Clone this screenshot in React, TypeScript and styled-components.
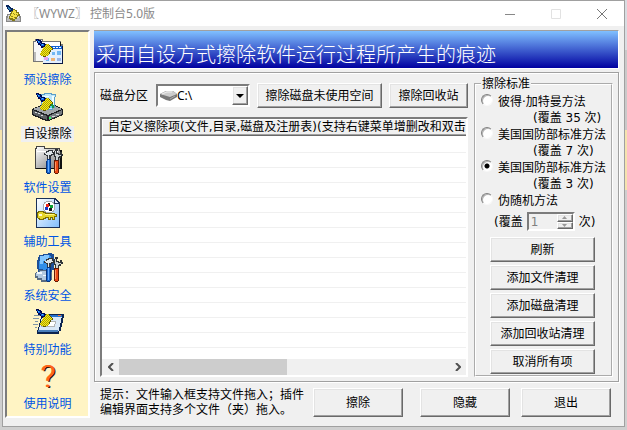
import React, { useState } from "react";
import styled, { createGlobalStyle, css } from "styled-components";

const FACE = "#f0f0f0";
const sans = '"DejaVu Sans", "Noto Sans CJK SC", sans-serif';
const narrowSans = '"Noto Sans", "Noto Sans CJK SC", sans-serif';

const GlobalStyle = createGlobalStyle`
  * { box-sizing: border-box; }
  body { margin: 0; background: #cfcfcf; color: #000; font: 12px/16px ${sans}; }
  button, input, select { font: inherit; color: inherit; margin: 0; padding: 0; border-radius: 0; }
  svg { display: block; flex: none; }
`;

const raised = css`
  border: 1px solid;
  border-color: #fff #696969 #696969 #fff;
  box-shadow: inset -1px -1px #a0a0a0, inset 1px 1px #e3e3e3;
`;
const sunken = css`
  border: 2px solid;
  border-color: #7c7c7c #fff #fff #7c7c7c;
`;
const etched = css`
  border: 1px solid #a0a0a0;
  box-shadow: inset 1px 1px #fff, 1px 1px #fff;
`;

const Desktop = styled.div`
  padding: 0 2px 2px;
  background: linear-gradient(#d9dde2 0 50px, #c9c9c9 50px 130px, #f5e3ae 130px 190px, #cfcfcf 190px);
`;
const Window = styled.main`
  border: 1px solid #a0a0a0;
  background: ${FACE};
`;
const TitleBar = styled.header`
  display: flex;
  align-items: center;
  height: 25px;
  padding: 0 10px 0 2px;
  background: #fff;
  color: #8a8a8a;
  font-family: ${narrowSans};
`;
const Title = styled.h1`
  flex: 1;
  margin: 0 0 0 4px;
  font-size: 12px;
  font-weight: 400;
`;
const CaptionButtons = styled.div`
  display: flex;
  gap: 22px;
`;
const CaptionButton = styled.button`
  display: grid;
  place-items: center;
  width: 24px;
  height: 24px;
  border: 0;
  background: none;
`;
const Body = styled.div`
  display: flex;
  gap: 4px;
  padding: 4px 5px 8px 2px;
`;
const Sidebar = styled.nav`
  ${sunken}
  flex: none;
  width: 85px;
  padding: 4px 0 2px;
  background: #fff4c4;
  font-family: ${narrowSans};
`;
const NavItem = styled.a`
  display: flex;
  flex-direction: column;
  align-items: center;
  gap: 4px;
  height: 54px;
  color: #0055e5;
  text-decoration: none;
`;
const NavLabel = styled.span<{ $active: boolean }>`
  padding: 0 2px;
  ${(p) => p.$active && css`background: ${FACE}; color: #000;`}
`;
const HelpMark = styled.span`
  height: 32px;
  font: 300 32px/32px Roboto, sans-serif;
  color: #ff6418;
  text-shadow: 1px 0 #ff6418, 2px 1px #301000;
`;
const Content = styled.div`
  display: flex;
  flex: 1;
  flex-direction: column;
  min-width: 0;
`;
const Banner = styled.h2`
  height: 39px;
  margin: 0 0 3px;
  padding: 6px 2px 0;
  overflow: hidden;
  border: solid;
  border-width: 1px 1px 1px 0;
  border-color: #a0a0a0 #fff #fff;
  background: linear-gradient(#80c0ff, #0000a0);
  color: #fff;
  font: 300 20px/34px "Noto Sans CJK SC", sans-serif;
  white-space: nowrap;
`;
const Panel = styled.section`
  ${etched}
  display: flex;
  gap: 6px;
  padding: 4px 5px 4px;
`;
const Workspace = styled.div`
  display: flex;
  flex: 1;
  flex-direction: column;
  gap: 9px;
  min-width: 0;
  padding-top: 6px;
`;
const Toolbar = styled.div`
  display: flex;
  align-items: center;
  gap: 7px;
  white-space: nowrap;
`;
const ToolbarLabel = styled.label`
  flex: none;
  width: 49px;
`;
const DrivePicker = styled.div`
  ${sunken}
  display: flex;
  flex: 1;
  align-items: center;
  height: 23px;
  padding-left: 2px;
  background: #fff;
`;
const DriveSelect = styled.select`
  flex: 1;
  min-width: 0;
  height: 19px;
  appearance: none;
  border: 0;
  outline: 0;
  background: transparent;
  font-family: ${narrowSans};
`;
const DropArrow = styled.span`
  ${raised}
  display: grid;
  place-items: center;
  width: 16px;
  height: 19px;
  background: ${FACE};
  pointer-events: none;
`;
const PushButton = styled.button<{ $width?: number; $tall?: boolean }>`
  ${raised}
  flex: none;
  width: ${(p) => (p.$width ? p.$width + "px" : "auto")};
  height: ${(p) => (p.$tall ? 29 : 25)}px;
  background: ${FACE};
  line-height: 16px;
  white-space: nowrap;
`;
const ListView = styled.div`
  ${sunken}
  display: flex;
  flex: 1;
  flex-direction: column;
  background: #fff;
`;
const Table = styled.table`
  width: 100%;
  flex: none;
  table-layout: fixed;
  border-spacing: 0;
`;
const HeadCell = styled.th`
  height: 17px;
  padding: 0 0 0 5px;
  overflow: hidden;
  border: solid;
  border-width: 1px 0 1px 1px;
  border-color: #fff #fff #696969;
  box-shadow: inset 0 -1px #a0a0a0;
  background: ${FACE};
  font-weight: 400;
  line-height: 15px;
  text-align: left;
  white-space: nowrap;
`;
const EmptyCell = styled.td<{ $first: boolean }>`
  height: ${(p) => (p.$first ? 17 : 15)}px;
  padding: 0;
  border-bottom: 1px solid ${FACE};
`;
const ScrollBar = styled.div`
  display: grid;
  grid-template-columns: 17px 1fr 17px;
  height: 16px;
  margin-top: auto;
  background: ${FACE};
`;
const ScrollButton = styled.button`
  display: grid;
  place-items: center;
  border: 0;
  background: none;
`;
const ScrollThumb = styled.div`
  width: 51%;
  background: #cdcdcd;
`;
const Standards = styled.fieldset`
  flex: none;
  width: 139px;
  min-width: 0;
  margin: 0;
  padding: 3px 0 1px 5px;
  border: 2px groove #fff;
`;
const Legend = styled.legend`
  padding: 0 1px;
  line-height: 14px;
`;
const Options = styled.div`
  display: grid;
  gap: 1px;
`;
const Option = styled.label`
  display: flex;
  gap: 5px;
  white-space: nowrap;
`;
const OptionText = styled.span`
  display: grid;
`;
const Passes = styled.span`
  padding-left: 35px;
`;
const Radio = styled.input`
  flex: none;
  width: 12px;
  height: 12px;
  appearance: none;
  border: 1px solid;
  border-color: #808080 #f8f8f8 #f8f8f8 #808080;
  border-radius: 50%;
  background: #fff;
  box-shadow: inset 1px 1px #b4b4b4;
  &:checked { background: radial-gradient(circle, #000 0 2px, #fff 3px); }
`;
const PassRow = styled.div`
  display: flex;
  align-items: center;
  gap: 4px;
  margin: 3px 0 6px 13px;
  white-space: nowrap;
`;
const Spinner = styled.span`
  ${sunken}
  display: flex;
  width: 48px;
  height: 19px;
`;
const PassInput = styled.input`
  flex: 1;
  min-width: 0;
  padding-left: 2px;
  border: 0;
  background: ${FACE};
  color: #808080;
`;
const SpinButtons = styled.span`
  display: grid;
  width: 16px;
`;
const SpinButton = styled.button`
  ${raised}
  display: grid;
  place-items: center;
  min-height: 0;
  background: ${FACE};
`;
const Actions = styled.div`
  display: grid;
  gap: 3px;
  margin: 0 16px 0 9px;
`;
const Footer = styled.footer`
  display: flex;
  gap: 8px;
  padding: 6px 8px 0 6px;
`;
const Hint = styled.p`
  flex: 1;
  margin: 0;
  line-height: 15px;
  white-space: nowrap;
`;
const HintLine = styled.span`
  display: block;
`;
const FooterButtons = styled.div`
  display: flex;
  gap: 17px;
`;
const FooterPair = styled.div`
  display: flex;
  gap: 11px;
`;

const Drawing = styled.svg.attrs({ width: 32, height: 32, viewBox: "0 0 32 32", shapeRendering: "crispEdges" })``;

const Broom = ({ id }: { id: string }) => (
  <g>
    <defs>
      <pattern id={id} width="2" height="2" patternUnits="userSpaceOnUse">
        <path d="M0 0h2v2H0z" fill="#ffee10" />
        <path d="M0 0h1v1H0zM1 1h1v1H1z" fill="#a69e08" />
      </pattern>
    </defs>
    <path d="M4 3h3v1h2v1h1v2h3v1h1v3h-2v1H9v-2H8V9H6V7H5V5H4z" fill="#000a50" />
    <path d="M5 4h1v1H5zM6 5h2v2H6zM8 7h1v1H8zM9 8h3v2H9z" fill="#1560e8" />
    <path d="M6 5h1v1H6zM10 8h1v1h-1z" fill="#3fd2ff" />
    <path d="M14 8h3v1h1v1h1v1h1v1h1v2h-2v1h-1v2h-1v2h-1v1h-2v1h-3v-1H9v-1H8v-2h1v-2h1v-2h1v-2h2V9h1z" fill={`url(#${id})`} />
    <path d="M17 9h1v1h-1zM18 10h1v1h-1zM19 11h1v1h-1zM20 12h1v2h-1zM18 14h1v2h-1zM17 16h1v2h-1zM11 20h3v1h-3z" fill="#5d5800" />
  </g>
);

const Tools = () => (
  <g>
    <path d="M12 9h2V7h2V6h5v2h2v3h-3v1h-1v4h-4v-4h-1v-1h-2z" fill="#34383c" />
    <path d="M13 9h2V8h2V7h3v2h2v1h-3v1h-2v4h-1v-4h-2v-1h-1z" fill="#dfe5e8" />
    <path d="M22 7h1V5h3v2h-1v2h2v1h1V8h2v2h1v2h-2v2h-2v3h-4v-4h-1v-2h-1V9h-1z" fill="#303436" />
    <path d="M23 7h1v3h2v1h3v1h-2v1h-1v3h-2v-4h-1z" fill="#ccd2d4" />
    <path d="M15 15h4v14h-1v1h-3v-1h-1V17h1z" fill="#07337c" />
    <path d="M15 16h3v13h-3z" fill="#1766cd" />
    <path d="M16 16h1v12h-1z" fill="#65aaff" />
    <path d="M22 16h5v13h-1v1h-3v-1h-1z" fill="#651804" />
    <path d="M23 17h3v12h-3z" fill="#ed4b16" />
    <path d="M23 18h1v9h-1z" fill="#ff9865" />
  </g>
);

const PresetIcon = () => (
  <Drawing>
    <path d="M1 5h2V3h8v2h18v3h2v20H12v-2H1z" fill="#777" />
    <path d="M2 6h2V4h6v2h2v19H2z" fill="#f6f6f6" />
    <path d="M2 16h2v9H2z" fill="#bbb" />
    <path d="M12 6h16v4H12z" fill="#fff" />
    <path d="M28 6h1v4h-1z" fill="#111" />
    <path d="M11 10h19v17H11z" fill="#e2efff" />
    <path d="M11 10h19v3H11z" fill="#1262d5" />
    <path d="M21 11h2v1h-2zM24 11h2v1h-2zM27 11h2v1h-2z" fill="#fff" />
    <path d="M30 10h1v18H11v-1h19z" fill="#0a1844" />
    <path d="M20 16h3v3h-3zM25 15h4v4h-4zM14 22h3v3h-3z" fill="#71b7f3" />
    <path d="M19 22h4v3h-4z" fill="#edb476" />
    <path d="M25 22h4v3h-4z" fill="#9bb6e7" />
    <path d="M12 21h4v3h-4z" fill="#e3a5ee" />
    <Broom id="straw-preset" />
  </Drawing>
);
const CustomIcon = () => (
  <Drawing>
    <path d="M0 19L9 15H23L31 19V25L17 31H14L0 25Z" fill="#1c1f22" />
    <path d="M1 19L9 16H23L30 19L16 25Z" fill="#a2a7ab" />
    <path d="M1 20L15 26V30L1 24Z" fill="#5d6266" />
    <path d="M17 26L30 20V24L17 30Z" fill="#777c80" />
    <path d="M3 22h2v1H3zM6 23h2v1H6zM9 25h2v1H9zM20 26h3v1h-3zM24 24h3v1h-3z" fill="#d5d9dc" />
    <path d="M17 27h2v2h-2z" fill="#2dff68" />
    <path d="M8 4h4V3h8v1h4v3h-1v11h-2v2H11v-2H9z" fill="#5b9ec7" />
    <path d="M9 5h4V4h6v1h4v2h-1v10h-2v2h-8v-2h-2z" fill="#bfe7fa" />
    <path d="M20 6h2v9h-2zM12 6h5v1h-5z" fill="#f1ffff" />
    <path d="M15 14h4v-2h2v3h1v3h-5v-1h-2z" fill="#16964a" />
    <path d="M17 16h3v2h-3z" fill="#54d3ef" />
    <Broom id="straw-custom" />
  </Drawing>
);
const SettingsIcon = () => (
  <Drawing>
    <defs><linearGradient id="folder" x2="1" y2="1"><stop stopColor="#fff" /><stop offset="1" stopColor="#777" /></linearGradient></defs>
    <path d="M3 4h1V2h9v2h15v2h2v19H3z" fill="#444" />
    <path d="M4 5h1V3h7v2h15v2h1v17H4z" fill="url(#folder)" />
    <path d="M5 7h21v1H5z" fill="#fff" />
    <path d="M28 6h2v19H4v-1h24z" fill="#111" />
    <Tools />
  </Drawing>
);
const HelperIcon = () => (
  <Drawing>
    <defs><linearGradient id="sheet" x2="1" y2="1"><stop stopColor="#fff" /><stop offset="1" stopColor="#83bffc" /></linearGradient></defs>
    <path d="M4 0h20v1h1v1h1v1h1v1h1v26H4z" fill="#1b3158" />
    <path d="M5 1h17v5h5v23H5z" fill="url(#sheet)" />
    <path d="M23 2h1v1h1v1h1v1h-3z" fill="#dcecff" />
    <path d="M14 3h6v1h2v2h1v6h-1v2h-2v1h-6v-1h-2v-2h-1V6h1V4h2z" fill="#a4a9ae" />
    <path d="M14 4h6v1h1v1h1v6h-1v1h-1v1h-6v-1h-1v-1h-1V6h1V5h1z" fill="#fff" />
    <path d="M14 6h2V5h2v3h-4z" fill="#111" />
    <path d="M14 6h3v3h-3z" fill="#ed2619" />
    <path d="M18 7h3v3h-3z" fill="#0aa132" />
    <path d="M13 9h3v3h-3z" fill="#1538c9" />
    <path d="M17 10h3v3h-3z" fill="#17131d" />
    <path d="M6 13h6v1h2v1h9v1h2v3h-2v3h-3v-2h-1v2h-3v-2h-2v1h-2v1H7v-1H6v-1H5v-6h1z" fill="#786b00" />
    <path d="M7 14h4v1h2v1h10v1h1v1h-2v3h-1v-2h-3v2h-1v-2h-4v1h-2v1H8v-1H6v-5h1z" fill="#e5d62b" />
    <path d="M7 16h3v2H7z" fill="#fff9d2" />
    <path d="M13 16h9v1h-9z" fill="#fff783" />
  </Drawing>
);
const SecurityIcon = () => (
  <Drawing>
    <path d="M7 3h4V2h5V1h4v1h2v16h-2v3h-7v-1H6v-3H5V8h1z" fill="#1e4f96" />
    <path d="M8 4h4V3h6v1h1v12h-2v2h-6v-1H7V9h1z" fill="#318ee9" />
    <path d="M8 4h4V3h5v4h-3v2h-3v3H8z" fill="#83c6ff" />
    <path d="M4 20h3v-2h8v2h5v8h-5v2H9v-2H5v-2H3v-5z" fill="#586b83" />
    <path d="M5 20h3v-1h6v2h5v5h-5v2h-4v-2H6v-2H4v-3z" fill="#b3c9df" />
    <path d="M5 20h5v2H5zM11 23h5v1h-5z" fill="#f1f8ff" />
    <Tools />
  </Drawing>
);
const SpecialIcon = () => (
  <Drawing>
    <path d="M10 8h22v4h-1v5h-1v4h-1v4h-2v3H5v-4h1v-3h1v-4h1v-4h1z" fill="#0c2450" />
    <path d="M11 9h19v3h-1v5h-1v4h-1v4h-1v1H6v-2h1v-3h1v-4h1v-4h1z" fill="#d9e8f7" />
    <path d="M11 9h19v2H10z" fill="#2671ce" />
    <path d="M26 9h3v1h-3z" fill="#ff782b" />
    <path d="M11 15h13v3h-1v3H9v-3h1z" fill="#b2b4b6" />
    <path d="M12 16h11v2h-1v2H10v-2h1z" fill="#fff" />
    <path d="M6 24h20v2H6z" fill="#497ebb" />
    <path d="M2 9h6v1H2zM1 12h6v1H1zM3 15h3v1H3zM1 18h5v1H1zM3 21h2v1H3z" fill="#7f94a7" />
    <Broom id="straw-special" />
  </Drawing>
);
const AppIcon = () => (
  <svg width="18" height="18" viewBox="0 0 18 18" shapeRendering="crispEdges">
    <path d="M2 9h13v2h1v6H1v-6h1z" fill="#888" />
    <path d="M3 10h11v3H3z" fill="#d8d8d8" />
    <path d="M2 13h13v3H2z" fill="#bbb" />
    <path d="M1 0h3v1h1v1h1v1h2v3H6v1H4V5H3V4H2V2H1z" fill="#06245d" />
    <path d="M3 2h1v1h1v1h1v1H4V4H3z" fill="#3386ba" />
    <path d="M8 4h2v1h2v2h2v2h1v2h-2v1h-1v2h-2v2H7v-1H5v-1H4v-3h1V8h1V6h2z" fill="#827817" />
    <path d="M8 5h2v1h1v2h2v2h-1v2h-2v2H8v-1H5v-2h1V9h1V7h1z" fill="#f4e145" />
    <path d="M8 8h1v1h1v1H9V9H8zM6 11h2v1H6zM11 9h1v1h-1zM9 12h1v1H9z" fill="#988b17" />
  </svg>
);
const DriveIcon = () => (
  <svg width="17" height="12" viewBox="0 0 17 12">
    <path d="M0 4l6-3h7l4 3v3l-7 4-4-1-6-3z" fill="#777" />
    <path d="M0 4l6-3h7l4 3-7 3z" fill="#ccc" />
    <path d="M2 4l5-2h5" fill="none" stroke="#eee" />
    <path d="M10 9l5-3" stroke="#aaa" />
  </svg>
);

const navItems = [
  { label: "预设擦除", icon: <PresetIcon /> },
  { label: "自设擦除", icon: <CustomIcon /> },
  { label: "软件设置", icon: <SettingsIcon /> },
  { label: "辅助工具", icon: <HelperIcon /> },
  { label: "系统安全", icon: <SecurityIcon /> },
  { label: "特别功能", icon: <SpecialIcon /> },
  { label: "使用说明", icon: <HelpMark aria-hidden="true">?</HelpMark> },
];
const methods = [
  { name: "彼得·加特曼方法", passes: "(覆盖 35 次)" },
  { name: "美国国防部标准方法", passes: "(覆盖 7 次)" },
  { name: "美国国防部标准方法", passes: "(覆盖 3 次)" },
  { name: "伪随机方法", passes: null },
];
const actions = ["刷新", "添加文件清理", "添加磁盘清理", "添加回收站清理", "取消所有项"];
const rows = Array.from({ length: 14 }, (_, i) => i);

export default function App() {
  const [active, setActive] = useState(1);
  const [method, setMethod] = useState(2);
  return (
    <Desktop>
      <GlobalStyle />
      <Window>
        <TitleBar>
          <AppIcon />
          <Title>〖WYWZ〗 控制台5.0版</Title>
          <CaptionButtons>
            <CaptionButton aria-label="最小化">
              <svg width="10" height="10"><path d="M0 5.5h10" stroke="#888" /></svg>
            </CaptionButton>
            <CaptionButton aria-label="最大化" disabled>
              <svg width="10" height="10"><path d="M.5.5h9v9h-9z" fill="none" stroke="#e2e2e2" /></svg>
            </CaptionButton>
            <CaptionButton aria-label="关闭">
              <svg width="10" height="10"><path d="M0 0l10 10M10 0L0 10" stroke="#777" /></svg>
            </CaptionButton>
          </CaptionButtons>
        </TitleBar>
        <Body>
          <Sidebar>
            {navItems.map((item, i) => (
              <NavItem key={item.label} href="#" onClick={(e) => { e.preventDefault(); setActive(i); }}>
                {item.icon}
                <NavLabel $active={i === active}>{item.label}</NavLabel>
              </NavItem>
            ))}
          </Sidebar>
          <Content>
            <Banner>采用自设方式擦除软件运行过程所产生的痕迹</Banner>
            <Panel>
              <Workspace>
                <Toolbar>
                  <ToolbarLabel htmlFor="drive">磁盘分区</ToolbarLabel>
                  <DrivePicker>
                    <DriveIcon />
                    <DriveSelect id="drive"><option>C:\</option></DriveSelect>
                    <DropArrow>
                      <svg width="8" height="4"><path d="M0 0h8L4 4z" /></svg>
                    </DropArrow>
                  </DrivePicker>
                  <PushButton $width={125}>擦除磁盘未使用空间</PushButton>
                  <PushButton $width={79}>擦除回收站</PushButton>
                </Toolbar>
                <ListView>
                  <Table>
                    <thead>
                      <tr><HeadCell>自定义擦除项(文件,目录,磁盘及注册表)(支持右键菜单增删改和双击</HeadCell></tr>
                    </thead>
                    <tbody>
                      {rows.map((r) => <tr key={r}><EmptyCell $first={r === 0} /></tr>)}
                    </tbody>
                  </Table>
                  <ScrollBar>
                    <ScrollButton aria-label="向左滚动">
                      <svg width="6" height="8"><path d="M5 0L1 4l4 4" fill="none" stroke="#505050" strokeWidth="2" /></svg>
                    </ScrollButton>
                    <ScrollThumb />
                    <ScrollButton aria-label="向右滚动">
                      <svg width="6" height="8"><path d="M1 0l4 4-4 4" fill="none" stroke="#505050" strokeWidth="2" /></svg>
                    </ScrollButton>
                  </ScrollBar>
                </ListView>
              </Workspace>
              <Standards>
                <Legend>擦除标准</Legend>
                <Options>
                  {methods.map((m, i) => (
                    <Option key={i}>
                      <Radio type="radio" name="method" checked={method === i} onChange={() => setMethod(i)} />
                      <OptionText>
                        <span>{m.name}</span>
                        {m.passes && <Passes>{m.passes}</Passes>}
                      </OptionText>
                    </Option>
                  ))}
                </Options>
                <PassRow>
                  <label htmlFor="passes">(覆盖</label>
                  <Spinner>
                    <PassInput id="passes" defaultValue="1" disabled />
                    <SpinButtons>
                      <SpinButton aria-label="增加" disabled>
                        <svg width="5" height="3"><path d="M0 3l2.500-3L5 3z" fill="#999" /></svg>
                      </SpinButton>
                      <SpinButton aria-label="减少" disabled>
                        <svg width="5" height="3"><path d="M0 0h5L2.500 3z" fill="#999" /></svg>
                      </SpinButton>
                    </SpinButtons>
                  </Spinner>
                  <span>次)</span>
                </PassRow>
                <Actions>
                  {actions.map((a) => <PushButton key={a}>{a}</PushButton>)}
                </Actions>
              </Standards>
            </Panel>
            <Footer>
              <Hint>
                <HintLine>提示：文件输入框支持文件拖入；插件</HintLine>
                <HintLine>编辑界面支持多个文件（夹）拖入。</HintLine>
              </Hint>
              <FooterButtons>
                <PushButton $width={90} $tall>擦除</PushButton>
                <FooterPair>
                  <PushButton $width={90} $tall>隐藏</PushButton>
                  <PushButton $width={90} $tall>退出</PushButton>
                </FooterPair>
              </FooterButtons>
            </Footer>
          </Content>
        </Body>
      </Window>
    </Desktop>
  );
}
